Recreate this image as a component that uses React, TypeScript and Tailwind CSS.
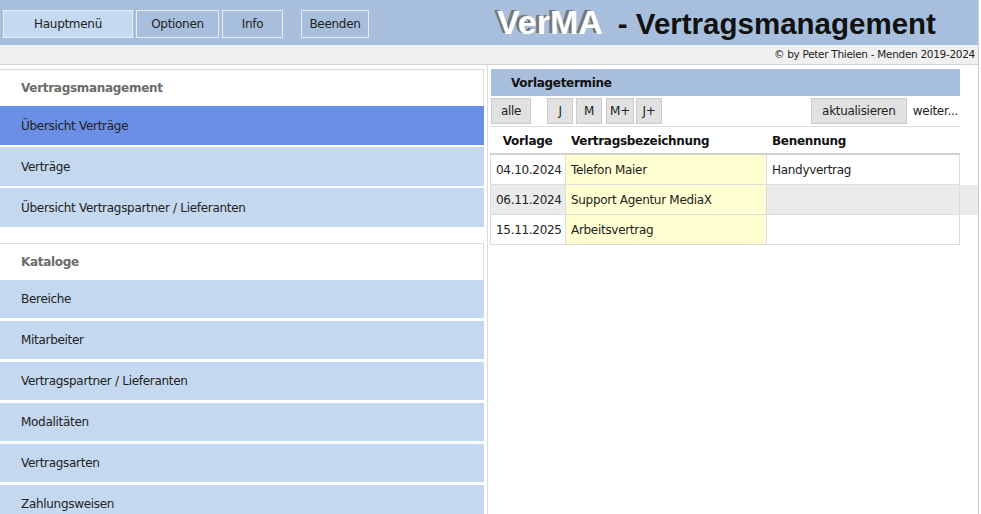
import React from "react";

const katalogItems = [
  "Bereiche",
  "Mitarbeiter",
  "Vertragspartner / Lieferanten",
  "Modalitäten",
  "Vertragsarten",
  "Zahlungsweisen",
];

const termine = [
  { datum: "04.10.2024", name: "Telefon Maier", benennung: "Handyvertrag" },
  { datum: "06.11.2024", name: "Support Agentur MediaX", benennung: "" },
  { datum: "15.11.2025", name: "Arbeitsvertrag", benennung: "" },
];

function MenuItem({ label }: { label: string }) {
  return (
    <div className="h-[38px] mb-[3px] flex items-center pl-[21px] bg-[#c4d8ef] text-[#222]">
      {label}
    </div>
  );
}

function SectionHeader({ label }: { label: string }) {
  return (
    <div className="h-[37px] flex items-center pl-[21px] bg-white border-t border-r border-[#dcdcdc] font-bold text-[#6b6b6b]">
      {label}
    </div>
  );
}

function SmallButton({ label, className = "" }: { label: string; className?: string }) {
  return (
    <button
      className={`h-[26px] bg-[#e1e1e1] border border-[#cbcbcb] text-[#222] whitespace-nowrap ${className}`}
    >
      {label}
    </button>
  );
}

export default function App() {
  return (
    <div className="w-[981px] h-[514px] overflow-hidden bg-white text-[12px] tracking-[-0.3px] font-['DejaVu_Sans',sans-serif]">
      <div className="w-[979px] h-full border-r border-[#cfcfcf] flex flex-col">
        {/* Top bar */}
        <div className="h-[45px] shrink-0 bg-[#a7bfdc] flex items-center pl-[3px] pt-[2px]">
          <button className="w-[130px] h-[28px] bg-[#c5d9f0] border border-[#e6eef8] text-[#222]">
            Hauptmenü
          </button>
          <button className="w-[83px] h-[28px] ml-[3px] bg-[#a7bfdc] border border-[#e6eef8] text-[#222]">
            Optionen
          </button>
          <button className="w-[61px] h-[28px] ml-[3px] bg-[#a7bfdc] border border-[#e6eef8] text-[#222]">
            Info
          </button>
          <button className="w-[68px] h-[28px] ml-[18px] bg-[#a7bfdc] border border-[#e6eef8] text-[#222]">
            Beenden
          </button>
          <div className="ml-[128px] -mt-[2px] flex items-baseline whitespace-nowrap font-bold tracking-normal font-['Liberation_Sans',Arial,sans-serif]">
            <span className="text-[34px] text-white [text-shadow:-3px_-1px_0_#777]">VerMA</span>
            <span className="ml-[15px] text-[29.5px] text-[#111]">- Vertragsmanagement</span>
          </div>
        </div>

        {/* Copyright */}
        <div className="h-[20px] shrink-0 bg-[#f0f0f0] border-b border-[#d4d4d4] flex items-center justify-end pr-[3px] text-[10.5px] text-[#222]">
          © by Peter Thielen - Menden 2019-2024
        </div>

        {/* Main */}
        <div className="flex flex-1 min-h-0">
          {/* Left menu */}
          <div className="w-[484px] shrink-0 pt-[4px]">
            <SectionHeader label="Vertragsmanagement" />
            <div className="h-[39px] mb-[2px] flex items-center pl-[21px] bg-[#6a8fe4] text-[#222]">
              Übersicht Verträge
            </div>
            <div className="h-[39px] mb-[2px] flex items-center pl-[21px] bg-[#c4d8ef] text-[#222]">
              Verträge
            </div>
            <div className="h-[39px] flex items-center pl-[21px] bg-[#c4d8ef] text-[#222]">
              Übersicht Vertragspartner / Lieferanten
            </div>
            <div className="h-[16px]" />
            <SectionHeader label="Kataloge" />
            {katalogItems.map((item) => (
              <MenuItem key={item} label={item} />
            ))}
          </div>

          {/* Right panel */}
          <div className="flex-1 ml-[3px] border-l border-[#dcdcdc] pt-[4px] pl-[2px]">
            <div className="w-[470px]">
              <div className="h-[27px] ml-[1px] bg-[#a7bfdc] flex items-center pl-[20px] font-bold text-[#111]">
                Vorlagetermine
              </div>
              <div className="h-[31px] flex items-center border-b border-[#dcdcdc] pl-[1px]">
                <SmallButton label="alle" className="w-[40px]" />
                <SmallButton label="J" className="w-[26px] ml-[16px]" />
                <SmallButton label="M" className="w-[26px] ml-[3px]" />
                <SmallButton label="M+" className="w-[28px] ml-[4px]" />
                <SmallButton label="J+" className="w-[26px] ml-[2px]" />
                <SmallButton label="aktualisieren" className="w-[96px] ml-auto" />
                <span className="ml-[6px] mr-[2px] text-[#222]">weiter...</span>
              </div>
              <div className="h-[27px] mt-[1px] flex items-center font-bold text-[#111] border-b-2 border-[#d0d0d0]">
                <div className="w-[75px] text-center">Vorlage</div>
                <div className="w-[201px] pl-[6px]">Vertragsbezeichnung</div>
                <div className="flex-1 pl-[6px]">Benennung</div>
              </div>
            </div>
            {termine.map((t, i) => (
              <div
                key={t.datum}
                className={`h-[30px] flex text-[#222] ${i === 1 ? "bg-[#ebebeb]" : ""}`}
              >
                <div className="w-[75px] flex items-center pl-[5px] border-l border-b border-[#dcdcdc]">
                  {t.datum}
                </div>
                <div className="w-[201px] flex items-center pl-[5px] bg-[#ffffd2] border-l border-b border-[#dcdcdc]">
                  {t.name}
                </div>
                <div className="w-[194px] flex items-center pl-[5px] border-l border-r border-b border-[#dcdcdc]">
                  {t.benennung}
                </div>
              </div>
            ))}
          </div>
        </div>
      </div>
    </div>
  );
}
